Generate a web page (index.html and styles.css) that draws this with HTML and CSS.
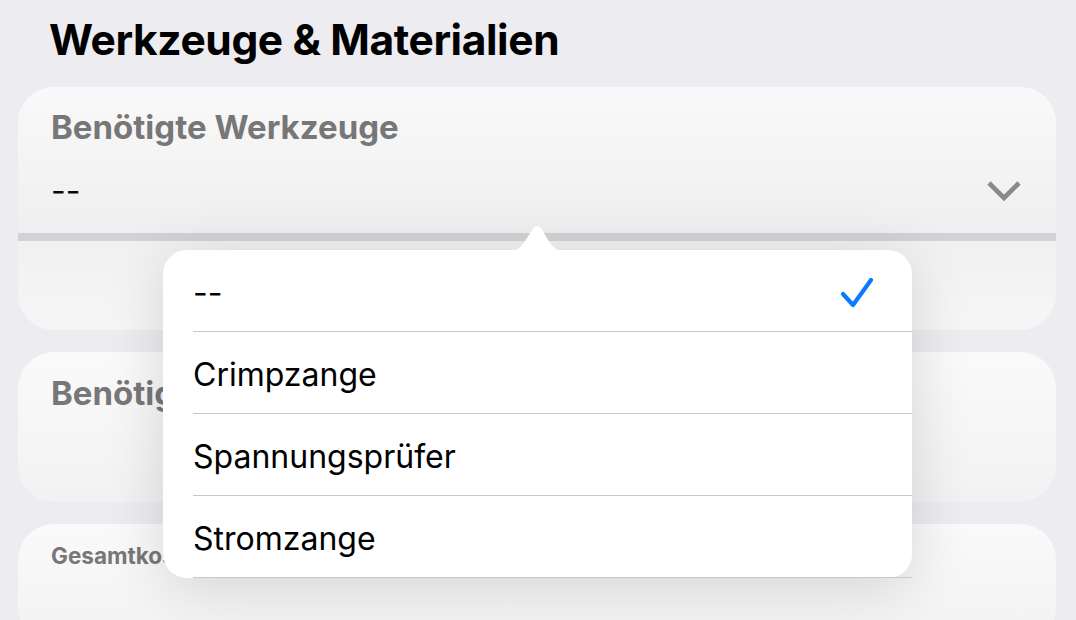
FILE: index.html
```html
<!DOCTYPE html>
<html lang="de">
<head>
<meta charset="utf-8">
<title>Werkzeuge &amp; Materialien</title>
<link rel="stylesheet" href="styles.css">
</head>
<body>
<main class="page">
  <h1 class="title">Werkzeuge &amp; Materialien</h1>

  <section class="card card-tools">
    <div class="field">
      <div class="label">Benötigte Werkzeuge</div>
      <div class="value-row">
        <span class="value">--</span>
        <svg class="chevron" width="36" height="22" viewBox="0 0 36 22" aria-hidden="true">
          <polyline points="3,3 18,18 33,3" fill="none" stroke="#8a8a8e" stroke-width="4.6" stroke-linecap="butt" stroke-linejoin="miter"/>
        </svg>
      </div>
    </div>
    <div class="band"></div>
    <div class="card-rest"></div>
  </section>

  <section class="card card-materials">
    <div class="label">Benötigte Materialien</div>
  </section>

  <section class="card card-total">
    <div class="label-small">Gesamtkosten</div>
  </section>
</main>

<div class="popover">
  <svg class="arrow" width="70" height="28" viewBox="0 0 70 28" aria-hidden="true">
    <path d="M0,28 C12,28 16,26 22,19 L30,6 C33,1 37,1 40,6 L48,19 C54,26 58,28 70,28 Z" fill="#ffffff"/>
  </svg>
  <ul class="menu">
    <li class="item selected">
      <span>--</span>
      <svg class="check" width="34" height="32" viewBox="0 0 34 32" aria-hidden="true">
        <polyline points="3,17 13,28 31,3" fill="none" stroke="#0a7aff" stroke-width="4.2" stroke-linecap="round" stroke-linejoin="round"/>
      </svg>
    </li>
    <li class="item"><span>Crimpzange</span></li>
    <li class="item"><span>Spannungsprüfer</span></li>
    <li class="item"><span>Stromzange</span></li>
  </ul>
</div>
</body>
</html>
```
FILE: styles.css
```css
* {
  box-sizing: border-box;
}

html, body {
  margin: 0;
  padding: 0;
}

body {
  width: 1076px;
  height: 620px;
  overflow: hidden;
  background: #ececf1;
  font-family: Inter, "Noto Sans", "Liberation Sans", sans-serif;
  position: relative;
}

.page {
  height: 620px;
  overflow: hidden;
  padding: 16px 20px 0 18px;
  display: flex;
  flex-direction: column;
  gap: 22px;
}

.title {
  flex: none;
  margin: 0 0 1px 0;
  padding-left: 31px;
  font-size: 42.5px;
  line-height: 48px;
  font-weight: 700;
  letter-spacing: -0.4px;
  color: #000;
  white-space: nowrap;
}

.card {
  flex: none;
  border-radius: 36px;
  background: linear-gradient(180deg, #fafafa 0%, #f2f2f3 100%);
  overflow: hidden;
}

.card-tools {
  height: 243px;
  display: flex;
  flex-direction: column;
}

.field {
  height: 146px;
  padding: 22px 34px 0 33px;
  display: flex;
  flex-direction: column;
  gap: 15px;
  background: linear-gradient(180deg, #f9f9f9 0%, #efeff0 100%);
}

.label {
  font-size: 33px;
  line-height: 36px;
  font-weight: 700;
  color: #777778;
  white-space: nowrap;
}

.value-row {
  height: 60px;
  display: flex;
  align-items: center;
  justify-content: space-between;
}

.value {
  font-size: 32px;
  color: #0a0a0a;
}

.chevron {
  display: block;
  margin-top: 2px;
}

.band {
  height: 8px;
  background: #d1d1d6;
}

.card-rest {
  flex: 1;
  background: linear-gradient(180deg, #f1f1f2 0%, #f6f6f7 100%);
}

.card-materials {
  height: 150px;
  padding: 23px 33px;
}

.card-total {
  height: 120px;
  padding: 20px 33px;
}

.label-small {
  font-size: 22.5px;
  line-height: 24px;
  font-weight: 700;
  color: #777778;
  white-space: nowrap;
}

.popover {
  position: absolute;
  left: 163px;
  top: 250px;
  width: 749px;
  background: #fff;
  border-radius: 24px;
  box-shadow: 0 10px 60px rgba(0, 0, 0, 0.14);
}

.arrow {
  position: absolute;
  left: 339px;
  top: -26px;
  display: block;
}

.menu {
  list-style: none;
  margin: 0;
  padding: 0;
}

.item {
  height: 82px;
  margin-left: 30px;
  padding: 4px 38px 0 0;
  border-bottom: 1px solid #c8c8cc;
  display: flex;
  align-items: center;
  justify-content: space-between;
  font-size: 32px;
  color: #000;
}

.check {
  display: block;
}
```
